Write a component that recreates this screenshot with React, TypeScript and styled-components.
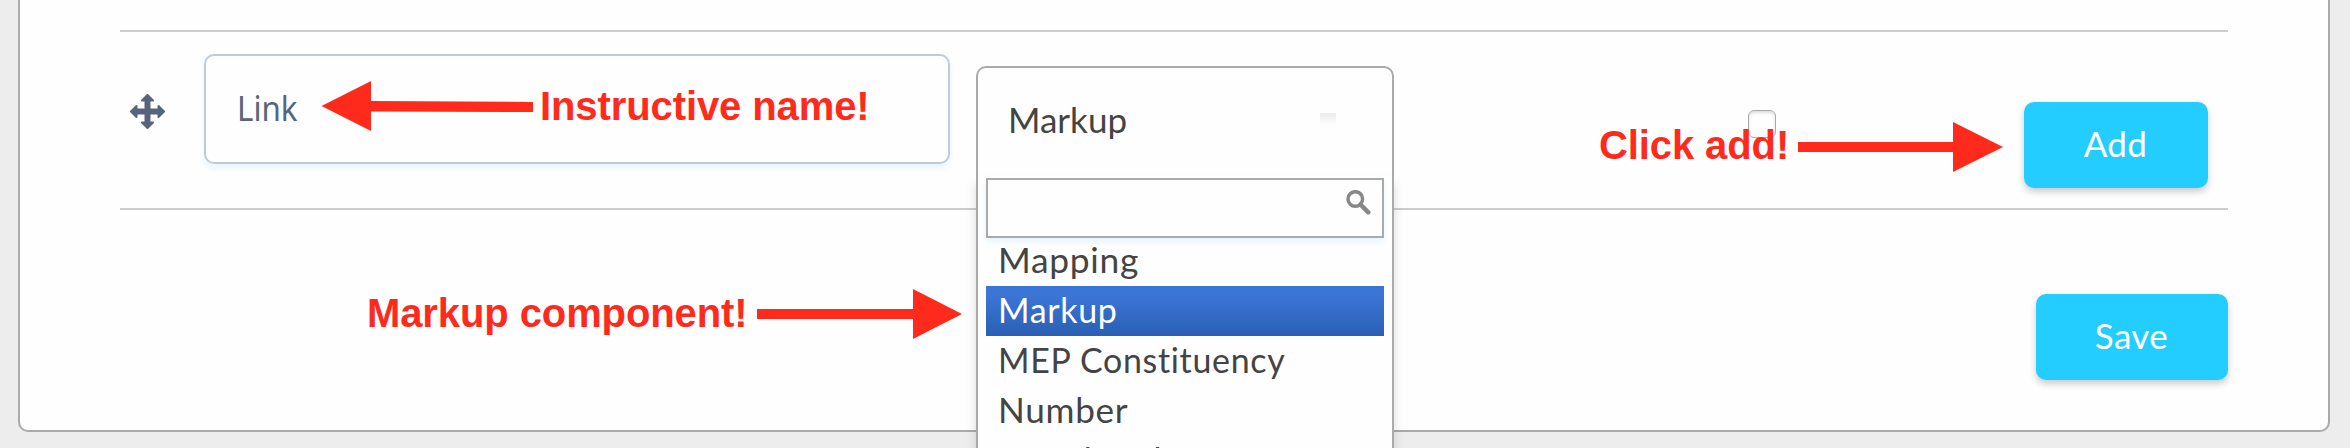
import React from 'react';
import styled, { createGlobalStyle } from 'styled-components';

const Global = createGlobalStyle`
  * { box-sizing: border-box; }
  body { margin: 0; background: #ededed; }
`;
const Page = styled.div`
  position: relative;
  height: 448px;
  padding: 0 20px 16px 18px;
  overflow: hidden;
`;
const Card = styled.main`
  height: 432px;
  padding: 30px 100px 0;
  background: #fefefe;
  border: 2px solid #aaa;
  border-top: 0;
  border-radius: 0 0 10px 10px;
`;
const FieldRow = styled.section`
  display: flex;
  align-items: flex-start;
  height: 180px;
  border-top: 2px solid #ccc;
  border-bottom: 2px solid #ccc;
`;
const DragHandle = styled.svg`
  width: 35px;
  height: 35px;
  margin: 62px 39px 0 10px;
  fill: #56657a;
`;
const NameInput = styled.div`
  width: 746px;
  height: 110px;
  padding: 0 31px;
  margin: 22px 26px 0 0;
  border: 2px solid #c1cadb;
  border-radius: 10px;
  box-shadow: 0 4px 6px #e8f4fd;
  color: #56657a;
  font: 34px/104px 'Noto Sans', sans-serif;
`;
const Label = styled.span<{ $stretch?: number }>`
  display: inline-block;
  white-space: nowrap;
  transform-origin: 0 50%;
  transform: scaleX(${(p) => p.$stretch ?? 1});
`;
const Select = styled.div`
  position: relative;
  z-index: 1;
  width: 418px;
  height: 110px;
  margin-top: 34px;
  padding: 0 56px 6px 30px;
  display: flex;
  align-items: center;
  justify-content: space-between;
  border: 2px solid #aaa;
  border-bottom: 0;
  border-radius: 10px 10px 0 0;
  background: #fefefe;
  color: #444;
  font: 35px/50px Lato, sans-serif;
`;
const Trigger = styled.span`
  width: 16px;
  height: 12px;
  background: linear-gradient(#eaeaea, #fefefe);
`;
const Menu = styled.div`
  position: absolute;
  top: 108px;
  left: -2px;
  width: 418px;
  height: 300px;
  padding: 2px 8px;
  border: 2px solid #aaa;
  border-top: 0;
  background: #fefefe;
  box-shadow: 0 8px 10px rgba(0, 0, 0, 0.15);
`;
const SearchBox = styled.div`
  display: flex;
  justify-content: flex-end;
  height: 60px;
  margin-bottom: -2px;
  padding: 10px 11px;
  border: 2px solid #aaa;
  box-shadow: 0 4px 6px #e8f4fd;
`;
const Option = styled.div<{ $active?: boolean }>`
  height: 50px;
  padding-left: 12px;
  line-height: 46px;
  letter-spacing: 0.7px;
  color: ${(p) => (p.$active ? '#fff' : '#444')};
  background: ${(p) => (p.$active ? 'linear-gradient(#3b75d5 20%, #2b60b5 95%)' : 'none')};
`;
const Checkbox = styled.span`
  width: 28px;
  height: 28px;
  margin: 78px 248px 0 354px;
  border: 1px solid #aaa;
  border-radius: 6px;
  box-shadow: inset 0 2px 3px #ddd;
`;
const Button = styled.button<{ $w: number }>`
  width: ${(p) => p.$w}px;
  height: 86px;
  padding: 0 1px 4px 0;
  border: 0;
  border-radius: 10px;
  background: #24cdff;
  color: #fff;
  font: 35px Lato, sans-serif;
  letter-spacing: 0.4px;
  box-shadow: 0 4px 7px rgba(0, 0, 0, 0.2);
`;
const RowAction = styled.div`
  margin-top: 70px;
`;
const Footer = styled.footer`
  display: flex;
  justify-content: flex-end;
  padding-top: 84px;
`;
const Note = styled.div<{ $x: number; $y: number }>`
  position: absolute;
  z-index: 2;
  left: ${(p) => p.$x}px;
  top: ${(p) => p.$y}px;
  display: flex;
  align-items: flex-start;
  color: #fe2b1c;
  font: bold 40px/50px 'Liberation Sans', sans-serif;
  white-space: nowrap;
`;
const NoteText = styled.span<{ $w: number; $line?: number }>`
  width: ${(p) => p.$w}px;
  line-height: ${(p) => p.$line ?? 50}px;
  letter-spacing: -0.1px;
`;
const Arrow = styled.svg`
  display: block;
  height: 50px;
  fill: #fe2b1c;
`;

const options = [
  { name: 'Mapping', stretch: 1.01 },
  { name: 'Markup', stretch: 0.97 },
  { name: 'MEP Constituency', stretch: 0.97 },
  { name: 'Number', stretch: 1.005 },
  { name: 'Page break', stretch: 0.99 },
];

export default function App() {
  return (
    <Page>
      <Global />
      <Card>
        <FieldRow>
          <DragHandle viewBox="0 0 35 35">
            <path
              d="M17.500 1l5.500 5.500H19.500v9h9V12l5.500 5.500-5.500 5.500v-3.500h-9v9H23L17.500 34 12 28.500h3.500v-9h-9V23L1 17.500 6.500 12v3.500h9v-9H12z"
              stroke="#56657a"
              strokeWidth="2"
              strokeLinejoin="round"
            />
          </DragHandle>
          <NameInput><Label $stretch={0.92}>Link</Label></NameInput>
          <Select>
            <Label>Markup</Label>
            <Trigger />
            <Menu>
              <SearchBox>
                <svg width="25" height="25" viewBox="0 0 25 25" fill="none" stroke="#888">
                  <circle cx="9.300" cy="9" r="7.300" strokeWidth="3.500" />
                  <path d="M14.500 14.500l7.800 7.800" strokeWidth="4.500" strokeLinecap="round" />
                </svg>
              </SearchBox>
              {options.map((o) => (
                <Option key={o.name} $active={o.name === 'Markup'}>
                  <Label $stretch={o.stretch}>{o.name}</Label>
                </Option>
              ))}
            </Menu>
          </Select>
          <Checkbox />
          <RowAction><Button $w={184}>Add</Button></RowAction>
        </FieldRow>
        <Footer><Button $w={192}>Save</Button></Footer>
      </Card>
      <Note $x={321} $y={81}>
        <Arrow width="219" viewBox="0 0 219 50"><path d="M.5 25L50 0v20l162 1v10L50 30.500V50z" /></Arrow>
        <NoteText $w={330}>Instructive name!</NoteText>
      </Note>
      <Note $x={367} $y={289}>
        <NoteText $w={390} $line={48}>Markup component!</NoteText>
        <Arrow width="206" viewBox="0 0 206 50"><path d="M0 20h156V0l49 25-49 25V30H0z" /></Arrow>
      </Note>
      <Note $x={1599} $y={122}>
        <NoteText $w={199} $line={47}>Click add!</NoteText>
        <Arrow width="205" viewBox="0 0 205 50"><path d="M0 20h155V0l50 25-50 25V30H0z" /></Arrow>
      </Note>
    </Page>
  );
}
